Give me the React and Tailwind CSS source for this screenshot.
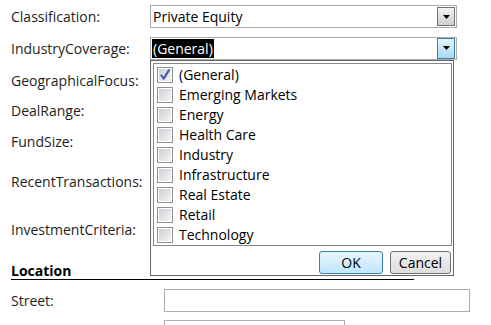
import React from 'react';

const font = { fontFamily: '"Open Sans", "Noto Sans", sans-serif' };

const industries = [
  { name: '(General)', checked: true },
  { name: 'Emerging Markets' },
  { name: 'Energy' },
  { name: 'Health Care' },
  { name: 'Industry' },
  { name: 'Infrastructure' },
  { name: 'Real Estate' },
  { name: 'Retail' },
  { name: 'Technology' },
];

const Arrow = () => (
  <svg width="7" height="4" viewBox="0 0 7 4">
    <path d="M0 0h7L3.5 4z" fill="#000" />
  </svg>
);

const Checkbox = ({ checked }) => (
  <div className="w-[16px] h-[16px] border border-[#8e8f8f] bg-white p-[1px] shrink-0">
    <div className="w-full h-full bg-gradient-to-br from-[#cbcfd5] to-[#f6f6f6] flex items-center justify-center">
      {checked && (
        <svg width="12" height="12" viewBox="0 0 12 12">
          <path d="M2.5 6.5l2.2 3.2L10 1.2" stroke="#4a5fa8" strokeWidth="2.2" fill="none" strokeLinecap="round" strokeLinejoin="round" />
        </svg>
      )}
    </div>
  </div>
);

const Row = ({ label, h, children }) => (
  <div className="flex items-center" style={{ height: h }}>
    <div className="w-[150px] shrink-0 pl-[11px] text-[14px] text-[#1e1e1e]">{label}</div>
    {children}
  </div>
);

export default function App() {
  return (
    <div className="w-[491px] h-[325px] bg-white overflow-hidden pt-[1px]" style={font}>
      <Row label="Classification:" h={31}>
        <div className="w-[307px] h-[23px] border border-[#acacac] bg-white flex items-center justify-between pl-[2px] pr-[1px]">
          <span className="text-[14px] text-black">Private Equity</span>
          <div className="w-[18px] h-[19px] border border-[#707070] bg-gradient-to-b from-[#f2f2f2] to-[#cfcfcf] flex items-center justify-center">
            <Arrow />
          </div>
        </div>
      </Row>
      <Row label="IndustryCoverage:" h={32}>
        <div className="relative">
          <div className="w-[307px] h-[23px] border border-[#acacac] bg-white flex items-center justify-between pl-[1px] pr-[1px]">
            <span className="text-[14px] text-white bg-black px-[1px] h-[19px] leading-[19px]">(General)</span>
            <div className="w-[18px] h-[21px] border border-[#3c7fb1] bg-gradient-to-b from-[#e5f4fc] to-[#a7d9f5] flex items-center justify-center">
              <Arrow />
            </div>
          </div>
          {/* dropdown popup */}
          <div className="absolute left-0 top-[23px] w-[304px] h-[216px] border border-[#646464] bg-white z-10 flex flex-col p-[2px] pr-[1px]">
            <div className="h-[183px] border border-[#828790] flex flex-col pt-[1px] pl-[3px]">
              {industries.map((it) => (
                <div key={it.name} className="h-[20px] flex items-center gap-[6px] text-[14px] text-black">
                  <Checkbox checked={it.checked} />
                  <span>{it.name}</span>
                </div>
              ))}
            </div>
            <div className="flex justify-end gap-[7px] mt-[5px] pr-[1px]">
              <button className="w-[64px] h-[23px] rounded-[3px] border border-[#3c7fb1] bg-gradient-to-b from-[#eaf6fd] to-[#bee6fd] text-[14px] text-black">OK</button>
              <button className="w-[61px] h-[23px] rounded-[3px] border border-[#707070] bg-gradient-to-b from-[#f2f2f2] to-[#dddddd] text-[14px] text-black">Cancel</button>
            </div>
          </div>
        </div>
      </Row>
      <Row label="GeographicalFocus:" h={32} />
      <Row label="DealRange:" h={28} />
      <Row label="FundSize:" h={34} />
      <Row label="RecentTransactions:" h={46} />
      <Row label="InvestmentCriteria:" h={50} />
      <div className="ml-[11px] w-[403px] h-[26px] border-b border-black flex items-end">
        <span className="text-[14px] font-bold text-black leading-[16px]">Location</span>
      </div>
      <div className="flex items-center h-[32px] mt-[4px]">
        <div className="w-[164px] pl-[11px] text-[14px] text-[#1e1e1e]">Street:</div>
        <div className="w-[306px] h-[23px] border border-[#acacac] bg-white" />
      </div>
      <div className="ml-[164px] mt-[4px] w-[181px] h-[23px] border border-[#acacac] bg-white" />
    </div>
  );
}
